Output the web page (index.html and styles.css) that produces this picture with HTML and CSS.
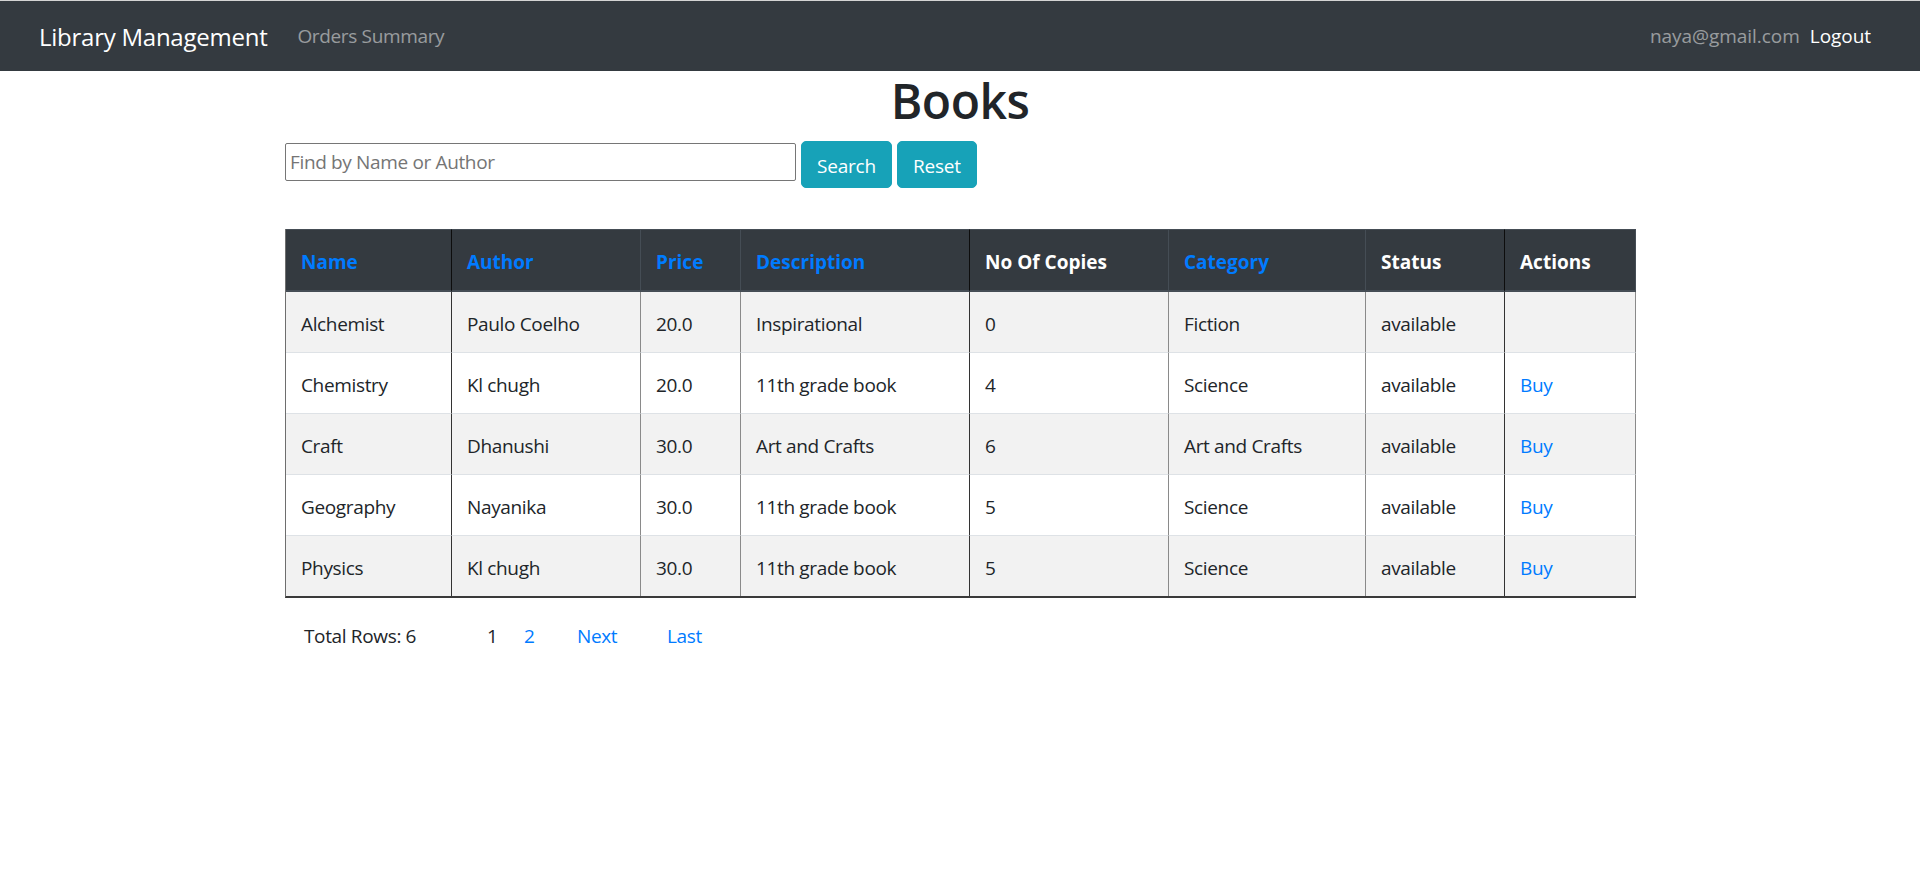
FILE: index.html
```html
<!DOCTYPE html>
<html lang="en">
<head>
<meta charset="utf-8">
<title>Library Management</title>
<link rel="stylesheet" href="styles.css">
</head>
<body>
<nav class="navbar">
  <a class="brand" href="#">Library Management</a>
  <a class="nav-link" href="#">Orders Summary</a>
  <div class="nav-right">
    <span class="nav-email">naya@gmail.com</span>
    <a class="nav-link nav-logout" href="#">Logout</a>
  </div>
</nav>
<main class="container">
  <h1 class="title">Books</h1>
  <div class="search-row">
    <input class="search-input" type="text" placeholder="Find by Name or Author">
    <button class="btn">Search</button>
    <button class="btn">Reset</button>
  </div>
  <table class="books">
    <colgroup>
      <col class="c1"><col class="c2"><col class="c3"><col class="c4"><col class="c5"><col class="c6"><col class="c7"><col class="c8">
    </colgroup>
    <thead>
      <tr>
        <th class="dark"><a href="#">Name</a></th>
        <th><a href="#">Author</a></th>
        <th><a href="#">Price</a></th>
        <th class="dark"><a href="#">Description</a></th>
        <th>No Of Copies</th>
        <th><a href="#">Category</a></th>
        <th class="dark">Status</th>
        <th>Actions</th>
      </tr>
    </thead>
    <tbody>
      <tr>
        <td class="dark">Alchemist</td><td>Paulo Coelho</td><td>20.0</td><td class="dark">Inspirational</td><td>0</td><td>Fiction</td><td class="dark">available</td><td></td>
      </tr>
      <tr>
        <td class="dark">Chemistry</td><td>Kl chugh</td><td>20.0</td><td class="dark">11th grade book</td><td>4</td><td>Science</td><td class="dark">available</td><td><a href="#">Buy</a></td>
      </tr>
      <tr>
        <td class="dark">Craft</td><td>Dhanushi</td><td>30.0</td><td class="dark">Art and Crafts</td><td>6</td><td>Art and Crafts</td><td class="dark">available</td><td><a href="#">Buy</a></td>
      </tr>
      <tr>
        <td class="dark">Geography</td><td>Nayanika</td><td>30.0</td><td class="dark">11th grade book</td><td>5</td><td>Science</td><td class="dark">available</td><td><a href="#">Buy</a></td>
      </tr>
      <tr>
        <td class="dark">Physics</td><td>Kl chugh</td><td>30.0</td><td class="dark">11th grade book</td><td>5</td><td>Science</td><td class="dark">available</td><td><a href="#">Buy</a></td>
      </tr>
    </tbody>
  </table>
  <div class="pager">
    <span class="total">Total Rows: 6</span>
    <span class="page current">1</span>
    <a class="page" href="#">2</a>
    <a class="page" href="#">Next</a>
    <a class="page" href="#">Last</a>
  </div>
</main>
</body>
</html>
```

FILE: styles.css
```css
* { box-sizing: border-box; }

body {
  margin: 0;
  font-family: "Segoe UI", "Open Sans", "Noto Sans", "Liberation Sans", sans-serif;
  font-size: 19px;
  letter-spacing: -0.35px;
  line-height: 30px;
  color: #212529;
  background: #fff;
}

a { color: #007bff; text-decoration: none; }

.navbar {
  display: flex;
  align-items: center;
  height: 71px;
  border-top: 1px solid #d4d4d4;
  background: #343a40;
  padding: 0 39px;
}

.brand {
  color: #fff;
  font-size: 24px;
  letter-spacing: -0.25px;
  line-height: 37px;
  margin-right: 20px;
}

.nav-link {
  color: rgba(255, 255, 255, 0.5);
  padding: 0 10px;
}

.nav-right {
  margin-left: auto;
  display: flex;
  align-items: center;
  letter-spacing: -0.05px;
}

.nav-email { color: rgba(255, 255, 255, 0.5); }

.nav-logout { color: #fff; }

.container {
  width: 1350px;
  margin: 0 auto;
}

.title {
  margin: 0 0 10px;
  text-align: center;
  font-size: 48px;
  letter-spacing: -0.5px;
  font-weight: 600;
  line-height: 60px;
}

.search-row {
  display: flex;
  align-items: flex-start;
}

.search-input {
  width: 511px;
  height: 38px;
  margin-top: 2px;
  border: 1px solid #767676;
  border-radius: 2px;
  padding: 1px 4px;
  font-family: inherit;
  font-size: 19px;
  letter-spacing: inherit;
  color: #212529;
}

.search-input::placeholder { color: #757575; }

.btn {
  margin-left: 5px;
  background: #17a2b8;
  border: 1px solid #17a2b8;
  border-radius: 5px;
  color: #fff;
  font-family: inherit;
  font-size: 19px;
  letter-spacing: -0.2px;
  line-height: 30px;
  padding: 8.5px 15px 6.5px;
}

.books {
  margin-top: 41px;
  width: 1350px;
  table-layout: fixed;
  border-collapse: separate;
  border-spacing: 0;
  border-left: 1px solid #6e6e6e;
  border-bottom: 2px solid #3a3a3a;
}

.c1 { width: 166px; }
.c2 { width: 189px; }
.c3 { width: 100px; }
.c4 { width: 229px; }
.c5 { width: 199px; }
.c6 { width: 197px; }
.c7 { width: 139px; }
.c8 { width: 131px; }

.books th,
.books td {
  padding: 17px 15px 13px;
  text-align: left;
  vertical-align: top;
}

.books th {
  background: #343a40;
  color: #fff;
  font-weight: bold;
  letter-spacing: 0;
  border-top: 1px solid #454d55;
  border-bottom: 2px solid #454d55;
  border-right: 1px solid #454d55;
}

.books th.dark { border-right-color: #0d0d0d; }

.books td {
  border-top: 1px solid #dee2e6;
  border-right: 1px solid #8a8a8a;
}

.books td.dark { border-right-color: #333; }

.books tbody tr:first-child td { border-top: 0; }

.books tbody tr:nth-child(odd) td { background: #f2f2f2; }

.pager {
  display: grid;
  grid-template-columns: 183px 37px 53px 90px auto;
  margin: 23px 0 0 19px;
}

.current { color: #212529; }
```
